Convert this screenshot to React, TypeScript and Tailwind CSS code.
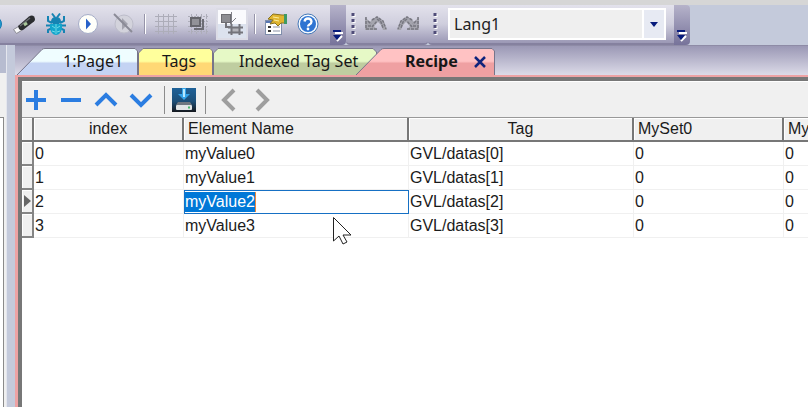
import React from "react";

interface Row {
  index: string;
  name: string;
  tag: string;
  set0: string;
  set1: string;
}

const rows: Row[] = [
  { index: "0", name: "myValue0", tag: "GVL/datas[0]", set0: "0", set1: "0" },
  { index: "1", name: "myValue1", tag: "GVL/datas[1]", set0: "0", set1: "0" },
  { index: "2", name: "myValue2", tag: "GVL/datas[2]", set0: "0", set1: "0" },
  { index: "3", name: "myValue3", tag: "GVL/datas[3]", set0: "0", set1: "0" },
];

const selectedIndex = "2";

/* Icons */

const GlobeEdge = () => (
  <svg width="6" height="24" viewBox="0 0 6 24">
    <circle cx="-6" cy="12" r="7.5" fill="#1b9bd0" stroke="#1879b0" />
  </svg>
);

const UsbIcon = () => (
  <svg width="24" height="24" viewBox="0 0 24 24">
    <path d="M1.500 17.500l5-3 3 4-5 3z" fill="#f8f8fa" stroke="#8a8a92" />
    <path d="M6 14L17 4.500q3-2 5 0 2 3 0 5L11 18q-2 1-4-1z" fill="#2b2d30" />
    <path d="M8 14L18 6" stroke="#6b6e73" strokeWidth="1.500" />
    <path d="M12 13l3-2" stroke="#a9c79a" strokeWidth="3" />
  </svg>
);

const BugIcon = () => (
  <svg width="24" height="24" viewBox="0 0 24 24">
    <path
      d="M8 1.500l3 4M16 1.500l-3 4M4 4v5l4 2M20 4v5l-4 2M2 13.500h20M4 21v-3l4-2M20 21v-3l-4-2"
      fill="none"
      stroke="#1583b3"
      strokeWidth="2"
    />
    <path d="M6 12h12v4q-1 7-6 7t-6-7z" fill="#14a5cc" />
    <path d="M7 10q0-5 5-5t5 5l-2 2H9z" fill="#1583b3" />
    <path d="M12 12v10M8 14l3 2M16 14l-3 2M8 19l3 1M16 19l-3 1" stroke="#6fdbe8" />
  </svg>
);

const PlayIcon = () => (
  <svg width="22" height="22" viewBox="0 0 22 22">
    <circle cx="11" cy="11" r="9.500" fill="#fffffa" stroke="#a5adc8" />
    <path d="M9 5.500l5 5.500-5 5.500z" fill="#2861c8" />
  </svg>
);

const StopIcon = () => (
  <svg width="24" height="24" viewBox="0 0 24 24">
    <circle cx="12" cy="12" r="9" fill="#d3d3dc" stroke="#bdbdca" />
    <path d="M10 6l6 6-6 6z" fill="#a3a3ae" />
    <path d="M2 2l18 18" stroke="#8b8b97" strokeWidth="2" />
  </svg>
);

const GridIcon = () => (
  <svg width="24" height="24" viewBox="0 0 24 24">
    <path
      d="M4.500 2v20M9.500 2v20M14.500 2v20M19.500 2v20M1 4.500h22M1 9.500h22M1 14.500h22M1 19.500h22"
      stroke="#adadb9"
    />
  </svg>
);

const SnapIcon = () => (
  <svg width="24" height="24" viewBox="0 0 24 24">
    <path
      d="M5.500 2v20M10.500 2v20M15.500 2v20M20.500 2v20M2 4.500h20M2 9.500h20M2 14.500h20M2 19.500h20"
      stroke="#adadb9"
      strokeDasharray="2 1"
    />
    <path d="M8 17h9V7" fill="none" stroke="#6c6c74" strokeWidth="2" />
    <rect x="5" y="6" width="9" height="8" fill="#929298" stroke="#66666c" strokeWidth="2" />
  </svg>
);

const AlignIcon = () => (
  <svg width="24" height="24" viewBox="0 0 24 24">
    <rect x="1.500" y="2.500" width="9" height="8" fill="#8c8c92" stroke="#6c6c72" />
    <path d="M11.500 0v14M16 6l-6 6" stroke="#7f7f86" />
    <rect x="11" y="15" width="9" height="5" fill="#b4b4ba" />
    <path
      d="M6 11v4h5M8 15.500h15M8 20.500h15M11.500 12v11M19.500 12v11"
      fill="none"
      stroke="#74747b"
      strokeWidth="2"
    />
  </svg>
);

const PropertiesIcon = () => (
  <svg width="24" height="24" viewBox="0 0 24 24">
    <rect x="1.500" y="8.500" width="16" height="14" fill="#fff" stroke="#7f8eab" />
    <path d="M2 10h15" stroke="#5875b2" strokeWidth="2" />
    <path d="M4 15h3M4 19h3" stroke="#333" strokeWidth="2" />
    <path d="M9 15h7M9 19h7" stroke="#8b93a5" />
    <path d="M4 7l5-5 9 1h4v8h-5l-3 3-3-3-5 1 3-4z" fill="#e0b52f" stroke="#8a7420" />
    <path d="M9 5l6 1M10 8l5 1" stroke="#fbee9d" />
    <path d="M20 2h3v10h-3z" fill="#3f9a63" />
  </svg>
);

const HelpIcon = () => (
  <svg width="24" height="24" viewBox="0 0 24 24">
    <circle cx="12" cy="12" r="10" fill="#f7fbff" stroke="#4579b8" />
    <circle cx="12" cy="12" r="8" fill="#2e74d2" />
    <path
      d="M8.500 9.500q.5-3 3.500-3t3.500 3q0 2-2 3-1.500 1-1.500 2"
      fill="none"
      stroke="#fff"
      strokeWidth="2.300"
    />
    <circle cx="12" cy="17" r="1.400" fill="#fff" />
  </svg>
);

const UndoIcon = ({ flip = false }: { flip?: boolean }) => (
  <svg width="24" height="20" viewBox="0 0 24 20" className={flip ? "-scale-x-100" : ""}>
    <path d="M1 3v13h12l-3-4 4-4 3 3 2 5h4l-3-8-6-5-6 2-2 3z" fill="#a5a5ae" />
    <path
      d="M2 3v12h11M4 7l3 3M4 12h5M8 13l5-6M8 6l5-3 6 4 3 8M13 5l4 3 2 6"
      fill="none"
      stroke="#777780"
      strokeWidth="1.500"
      strokeDasharray="3 1"
    />
  </svg>
);

const SaveIcon = () => (
  <svg width="26" height="26" viewBox="0 0 26 26" className="shrink-0">
    <defs>
      <linearGradient id="disk" x1="0" y1="0" x2="0" y2="1">
        <stop offset="0" stopColor="#1f6299" />
        <stop offset="0.55" stopColor="#1d5079" />
        <stop offset="1" stopColor="#16191f" />
      </linearGradient>
    </defs>
    <rect x="1" y="1" width="24" height="24" fill="url(#disk)" />
    <path d="M11 1h4v6h4l-6 6-6-6h4z" fill="#35a4ea" />
    <path d="M13 2v8" stroke="#b7e9ff" strokeWidth="2" />
    <path d="M7 15h12l2 3H5z" fill="#6f7780" />
    <rect x="5" y="18" width="16" height="5" rx="1" fill="#e2e5e6" />
    <path d="M17 20.500h2" stroke="#48b96a" strokeWidth="2" />
  </svg>
);

const Stroke = ({ d, color = "#2b7de1" }: { d: string; color?: string }) => (
  <svg width="24" height="24" viewBox="0 0 24 24">
    <path d={d} fill="none" stroke={color} strokeWidth="4" />
  </svg>
);

const Overflow = () => (
  <svg width="12" height="14" viewBox="0 0 12 14">
    <path d="M3 4h8M5 12l5-5" stroke="#fff" strokeWidth="2" />
    <path d="M1 1h8v2H1zM1 6h8l-4 5z" fill="#071b7c" />
  </svg>
);

const Grip = () => (
  <svg width="6" height="24" viewBox="0 0 6 24" className="shrink-0">
    <path d="M4 2v22" stroke="#fff" strokeWidth="3" strokeDasharray="3 3" />
    <path d="M3 1v22" stroke="#4f4c78" strokeWidth="3" strokeDasharray="3 3" />
  </svg>
);

const IconButton = ({
  label,
  className = "w-6",
  children,
}: {
  label: string;
  className?: string;
  children: React.ReactNode;
}) => (
  <button
    aria-label={label}
    className={`flex h-8 shrink-0 items-center justify-center ${className}`}
  >
    {children}
  </button>
);

/* Top toolbar */

const barFill = "bg-linear-to-b from-[#e3e2ec] via-[#cfcedd] to-[#9b98b5]";
const capFill = "bg-linear-to-b from-[#b6b3ca] to-[#77739a]";

const MainToolbar = () => (
  <div className="flex h-10 bg-[#c4cadb]">
    <div
      className={`flex h-10 shrink-0 items-center border-b-2 border-[#85819f] pr-2.5 ${barFill}`}
    >
      <IconButton label="Web" className="w-2 justify-start">
        <GlobeEdge />
      </IconButton>
      <IconButton label="Download" className="ml-1 w-6">
        <UsbIcon />
      </IconButton>
      <IconButton label="Debug" className="ml-2 w-6">
        <BugIcon />
      </IconButton>
      <IconButton label="Run" className="ml-2 w-6">
        <PlayIcon />
      </IconButton>
      <IconButton label="Stop" className="ml-3 w-6">
        <StopIcon />
      </IconButton>
      <span className="ml-2 h-5 w-0.5 border-r border-white bg-[#9694a9]" />
      <IconButton label="Grid" className="ml-2 w-6">
        <GridIcon />
      </IconButton>
      <IconButton label="Snap" className="ml-2 w-6">
        <SnapIcon />
      </IconButton>
      <IconButton
        label="Snap to objects"
        className="ml-1.5 w-8 border-2 border-[#dcdce6] bg-linear-to-b from-[#fafafd] from-50% to-[#dce2ee] to-50%"
      >
        <AlignIcon />
      </IconButton>
      <span className="ml-1.5 h-5 w-0.5 border-r border-white bg-[#9694a9]" />
      <IconButton label="Properties" className="ml-2 w-6">
        <PropertiesIcon />
      </IconButton>
      <IconButton label="Help" className="ml-2 w-6">
        <HelpIcon />
      </IconButton>
    </div>
    <button
      aria-label="More tools"
      className={`flex w-4 shrink-0 items-end justify-center rounded-br pb-0.5 ${capFill}`}
    >
      <Overflow />
    </button>
    <div
      className={`flex h-10 shrink-0 items-center gap-2 rounded-b border-b-2 border-[#85819f] pr-2 pl-1 ${barFill}`}
    >
      <Grip />
      <IconButton label="Undo">
        <UndoIcon />
      </IconButton>
      <IconButton label="Redo">
        <UndoIcon flip />
      </IconButton>
    </div>
    <div
      className={`flex h-10 shrink-0 items-center gap-2.5 rounded-bl border-b-2 border-[#85819f] pr-2 pl-1 ${barFill}`}
    >
      <Grip />
      <div className="relative">
        <select
          aria-label="Language"
          className="block h-8 w-[218px] appearance-none border-2 border-white bg-[#efefef] pl-1 font-['Noto_Sans',sans-serif] text-base leading-6 text-[#222]"
        >
          <option>Lang1</option>
        </select>
        <span className="pointer-events-none absolute top-0.5 right-0.5 flex h-7 w-[22px] items-center justify-center border-l-2 border-white bg-[#e7eaf3]">
          <svg width="8" height="5" viewBox="0 0 8 5">
            <path d="M0 0h8L4 5z" fill="#071b7c" />
          </svg>
        </span>
      </div>
    </div>
    <button
      aria-label="More languages"
      className={`flex w-4 shrink-0 items-end justify-center rounded-r pb-0.5 ${capFill}`}
    >
      <Overflow />
    </button>
  </div>
);

/* Document tabs */

interface TabProps {
  label: string;
  width: string;
  shape: string;
  top: string;
  bottom: string;
  viewWidth: number;
  textClass: string;
  children?: React.ReactNode;
}

const Tab = ({ label, width, shape, top, bottom, viewWidth, textClass, children }: TabProps) => (
  <div className={`relative h-7 shrink-0 ${width}`}>
    <svg
      className="absolute inset-0 h-7 w-full"
      viewBox={`0 0 ${viewWidth} 28`}
      preserveAspectRatio="none"
    >
      <defs>
        <linearGradient id={`tab-${viewWidth}`} x1="0" y1="0" x2="0" y2="1">
          <stop offset="0" stopColor={top} />
          <stop offset="0.48" stopColor={top} />
          <stop offset="0.56" stopColor={bottom} />
          <stop offset="1" stopColor={bottom} />
        </linearGradient>
      </defs>
      <path d={shape} fill={`url(#tab-${viewWidth})`} stroke="#77758a" />
    </svg>
    <div className={`relative flex h-7 items-center ${textClass}`}>
      <button className="whitespace-nowrap">{label}</button>
      {children}
    </div>
  </div>
);

const TabStrip = () => (
  <div
    role="tablist"
    className="flex h-[30px] items-end border-t border-[#8e8ba6] bg-linear-to-b from-[#9b98b5] to-[#dcdbe8] font-['Noto_Sans',sans-serif] text-base text-[#171717]"
  >
    <Tab
      label="1:Page1"
      width="w-[123px]"
      viewWidth={123}
      shape="M2 28L27 2.500Q28 1.500 30 1.500H120L122.500 4V28"
      top="#effdff"
      bottom="#c4d3f3"
      textClass="pl-12"
    />
    <Tab
      label="Tags"
      width="w-[75px]"
      viewWidth={75}
      shape="M.5 28V6L5 1.500H72L74.500 4V28"
      top="#ffff9c"
      bottom="#ffd875"
      textClass="pl-6"
    />
    <Tab
      label="Indexed Tag Set"
      width="w-[164px]"
      viewWidth={164}
      shape="M.5 28V6L5 1.500H160L163.500 5V28"
      top="#e6f9c6"
      bottom="#bfcda0"
      textClass="pl-6.5"
    />
    <Tab
      label="Recipe"
      width="-ml-6 w-[142px]"
      viewWidth={142}
      shape="M3 28L28 2.500Q29 1.500 31 1.500H139L141.500 4V28"
      top="#ffc2c3"
      bottom="#efa0a2"
      textClass="gap-4 pl-13 font-bold"
    >
      <button aria-label="Close tab" className="pt-0.5">
        <svg width="12" height="12" viewBox="0 0 12 12">
          <path d="M1 1l10 10M11 1L1 11" stroke="#10247c" strokeWidth="2.500" />
        </svg>
      </button>
    </Tab>
  </div>
);

/* Recipe editor */

const EditorToolbar = () => (
  <div className="flex h-9 items-center gap-[11px] border-t border-white bg-[#f0f0f0] pl-0.5">
    <IconButton label="Add">
      <Stroke d="M12 2v20M2 12h20" />
    </IconButton>
    <IconButton label="Remove">
      <Stroke d="M2 12h20" />
    </IconButton>
    <IconButton label="Move up">
      <Stroke d="M2 17L12 7l10 10" />
    </IconButton>
    <IconButton label="Move down">
      <Stroke d="M2 7l10 10L22 7" />
    </IconButton>
    <span className="-mr-1 h-7 w-px bg-[#8c8c8c]" />
    <IconButton label="Save">
      <SaveIcon />
    </IconButton>
    <span className="-ml-0.5 h-7 w-px bg-[#8c8c8c]" />
    <IconButton label="Previous">
      <Stroke d="M17 2L7 12l10 10" color="#9e9e9e" />
    </IconButton>
    <IconButton label="Next" className="-ml-0.5 w-6">
      <Stroke d="M7 2l10 10L7 22" color="#9e9e9e" />
    </IconButton>
  </div>
);

const headCell =
  "h-6 border-r-2 border-b-2 border-[#777] bg-[#f0f0f0] p-0 font-normal shadow-[inset_1px_1px_0_#fff]";
const bodyCell = "h-6 border-r border-b border-[#f0f0f0] p-0 pl-px";

const RecipeTable = () => (
  <table className="w-[910px] table-fixed border-separate border-spacing-0 border-t border-[#999] text-base leading-5 text-[#1b1b1b]">
    <colgroup>
      <col className="w-3" />
      <col className="w-[150px]" />
      <col className="w-[225px]" />
      <col className="w-[225px]" />
      <col className="w-[150px]" />
      <col />
    </colgroup>
    <thead>
      <tr>
        <th className={headCell} />
        <th className={headCell}>index</th>
        <th className={`${headCell} pl-1 text-left`}>Element Name</th>
        <th className={headCell}>Tag</th>
        <th className={`${headCell} pl-1 text-left`}>MySet0</th>
        <th className={`${headCell} pl-1 text-left`}>MySet1</th>
      </tr>
    </thead>
    <tbody>
      {rows.map((row) => (
        <tr key={row.index}>
          <td className="h-6 border-r-2 border-b-2 border-[#858585] bg-[#f0f0f0] p-0 shadow-[inset_1px_1px_0_#fff]">
            {row.index === selectedIndex && (
              <svg width="7" height="12" viewBox="0 0 7 12" className="ml-0.5 block">
                <path d="M0 0l7 6-7 6z" fill="#666" />
              </svg>
            )}
          </td>
          <td className={bodyCell}>{row.index}</td>
          {row.index === selectedIndex ? (
            <td className="h-6 border border-[#1670c4] p-0">
              <div className="flex">
                <span className="border-r border-[#f08a3c] bg-[#0078d7] text-white">
                  {row.name}
                </span>
              </div>
            </td>
          ) : (
            <td className={bodyCell}>{row.name}</td>
          )}
          <td className={bodyCell}>{row.tag}</td>
          <td className={bodyCell}>{row.set0}</td>
          <td className={bodyCell}>{row.set1}</td>
        </tr>
      ))}
    </tbody>
  </table>
);

const Pointer = () => (
  <svg
    width="20"
    height="28"
    viewBox="0 0 20 28"
    className="pointer-events-none absolute top-[217px] left-[333px]"
  >
    <path d="M.5.5V24l5.500-5 4 8 4-2-4-7h8z" fill="#fff" stroke="#222" />
  </svg>
);

const App: React.FC = () => (
  <div className="relative flex min-h-screen flex-col overflow-hidden bg-[#c4cadb] font-['Liberation_Sans',sans-serif]">
    <div className="h-[5px] bg-[#d6d6d6]" />
    <MainToolbar />
    <div className="flex flex-1">
      <aside className="mr-2 flex w-[7px] shrink-0 flex-col border-r border-[#e4e6ee] bg-[#f0f0f0]">
        <div className="h-7 bg-[#b7bcd0]" />
        <div className="mt-11 mr-0.5 flex-1 border-t border-r border-[#8a8a8a] bg-white" />
      </aside>
      <main className="flex min-w-0 flex-1 flex-col">
        <TabStrip />
        <div className="flex flex-1 flex-col border-t-2 border-l-3 border-[#eda2a4]">
          <div className="flex-1 overflow-hidden border-t-4 border-l-4 border-[#777] bg-white">
            <EditorToolbar />
            <RecipeTable />
          </div>
        </div>
      </main>
    </div>
    <Pointer />
  </div>
);

export default App;
